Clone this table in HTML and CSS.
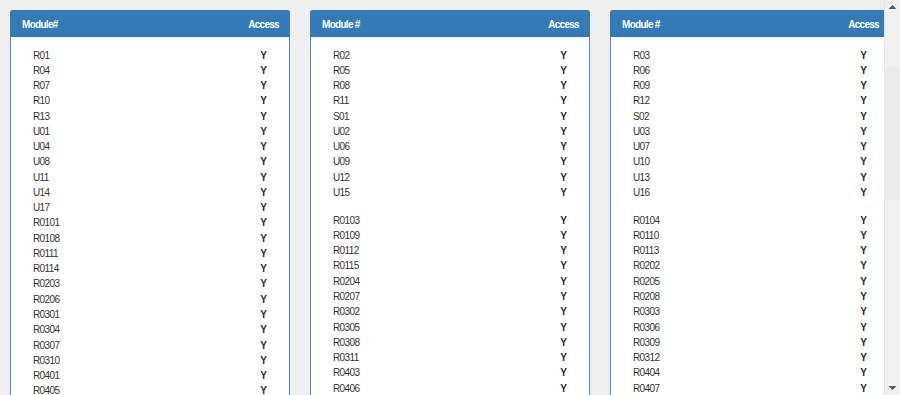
FILE: index.html
```html
<!DOCTYPE html>
<html lang="en">
<head>
<meta charset="utf-8">
<title>Module Access</title>
<link rel="stylesheet" href="styles.css">
</head>
<body>
<div class="screen">
  <div class="viewport">
    <div class="columns">
      <section class="panel">
        <header class="panel-head"><span>Module#</span><span>Access</span></header>
        <div class="panel-body">
          <div class="row"><span>R01</span><b>Y</b></div>
          <div class="row"><span>R04</span><b>Y</b></div>
          <div class="row"><span>R07</span><b>Y</b></div>
          <div class="row"><span>R10</span><b>Y</b></div>
          <div class="row"><span>R13</span><b>Y</b></div>
          <div class="row"><span>U01</span><b>Y</b></div>
          <div class="row"><span>U04</span><b>Y</b></div>
          <div class="row"><span>U08</span><b>Y</b></div>
          <div class="row"><span>U11</span><b>Y</b></div>
          <div class="row"><span>U14</span><b>Y</b></div>
          <div class="row"><span>U17</span><b>Y</b></div>
          <div class="row"><span>R0101</span><b>Y</b></div>
          <div class="row"><span>R0108</span><b>Y</b></div>
          <div class="row"><span>R0111</span><b>Y</b></div>
          <div class="row"><span>R0114</span><b>Y</b></div>
          <div class="row"><span>R0203</span><b>Y</b></div>
          <div class="row"><span>R0206</span><b>Y</b></div>
          <div class="row"><span>R0301</span><b>Y</b></div>
          <div class="row"><span>R0304</span><b>Y</b></div>
          <div class="row"><span>R0307</span><b>Y</b></div>
          <div class="row"><span>R0310</span><b>Y</b></div>
          <div class="row"><span>R0401</span><b>Y</b></div>
          <div class="row"><span>R0405</span><b>Y</b></div>
        </div>
      </section>
      <section class="panel">
        <header class="panel-head"><span>Module #</span><span>Access</span></header>
        <div class="panel-body">
          <div class="row"><span>R02</span><b>Y</b></div>
          <div class="row"><span>R05</span><b>Y</b></div>
          <div class="row"><span>R08</span><b>Y</b></div>
          <div class="row"><span>R11</span><b>Y</b></div>
          <div class="row"><span>S01</span><b>Y</b></div>
          <div class="row"><span>U02</span><b>Y</b></div>
          <div class="row"><span>U06</span><b>Y</b></div>
          <div class="row"><span>U09</span><b>Y</b></div>
          <div class="row"><span>U12</span><b>Y</b></div>
          <div class="row"><span>U15</span><b>Y</b></div>
          <div class="spacer"></div>
          <div class="row"><span>R0103</span><b>Y</b></div>
          <div class="row"><span>R0109</span><b>Y</b></div>
          <div class="row"><span>R0112</span><b>Y</b></div>
          <div class="row"><span>R0115</span><b>Y</b></div>
          <div class="row"><span>R0204</span><b>Y</b></div>
          <div class="row"><span>R0207</span><b>Y</b></div>
          <div class="row"><span>R0302</span><b>Y</b></div>
          <div class="row"><span>R0305</span><b>Y</b></div>
          <div class="row"><span>R0308</span><b>Y</b></div>
          <div class="row"><span>R0311</span><b>Y</b></div>
          <div class="row"><span>R0403</span><b>Y</b></div>
          <div class="row"><span>R0406</span><b>Y</b></div>
        </div>
      </section>
      <section class="panel">
        <header class="panel-head"><span>Module #</span><span>Access</span></header>
        <div class="panel-body">
          <div class="row"><span>R03</span><b>Y</b></div>
          <div class="row"><span>R06</span><b>Y</b></div>
          <div class="row"><span>R09</span><b>Y</b></div>
          <div class="row"><span>R12</span><b>Y</b></div>
          <div class="row"><span>S02</span><b>Y</b></div>
          <div class="row"><span>U03</span><b>Y</b></div>
          <div class="row"><span>U07</span><b>Y</b></div>
          <div class="row"><span>U10</span><b>Y</b></div>
          <div class="row"><span>U13</span><b>Y</b></div>
          <div class="row"><span>U16</span><b>Y</b></div>
          <div class="spacer"></div>
          <div class="row"><span>R0104</span><b>Y</b></div>
          <div class="row"><span>R0110</span><b>Y</b></div>
          <div class="row"><span>R0113</span><b>Y</b></div>
          <div class="row"><span>R0202</span><b>Y</b></div>
          <div class="row"><span>R0205</span><b>Y</b></div>
          <div class="row"><span>R0208</span><b>Y</b></div>
          <div class="row"><span>R0303</span><b>Y</b></div>
          <div class="row"><span>R0306</span><b>Y</b></div>
          <div class="row"><span>R0309</span><b>Y</b></div>
          <div class="row"><span>R0312</span><b>Y</b></div>
          <div class="row"><span>R0404</span><b>Y</b></div>
          <div class="row"><span>R0407</span><b>Y</b></div>
        </div>
      </section>
    </div>
  </div>
  <div class="scrollbar">
    <div class="sb-btn"><svg width="9" height="6" viewBox="0 0 9 6"><path d="M0.5 5 L4.5 1 L8.5 5 Z" fill="#5a5a5a"/></svg></div>
    <div class="sb-track">
      <div class="sb-gap-top"></div>
      <div class="sb-thumb"></div>
    </div>
    <div class="sb-btn"><svg width="9" height="6" viewBox="0 0 9 6"><path d="M0.5 1 L4.5 5 L8.5 1 Z" fill="#5a5a5a"/></svg></div>
  </div>
</div>
</body>
</html>
```

FILE: styles.css
```css
html, body {
  margin: 0;
  padding: 0;
  height: 100%;
  overflow: hidden;
}

body {
  background: #efefef;
  font-family: "Liberation Sans", Arial, sans-serif;
  color: #333333;
}

.screen {
  display: flex;
  height: 395px;
  width: 900px;
}

.viewport {
  flex: 1 1 auto;
  overflow: hidden;
  min-width: 0;
}

.columns {
  display: flex;
  gap: 20px;
  padding: 10px 10px 0 10px;
  width: 880px;
}

.panel {
  flex: 0 0 280px;
  width: 280px;
  box-sizing: border-box;
  background: #ffffff;
  border: 1px solid #4f8bc6;
  border-top: none;
  border-radius: 4px 4px 0 0;
}

.panel-head {
  display: flex;
  justify-content: space-between;
  align-items: center;
  box-sizing: border-box;
  height: 27px;
  margin: 0 -1px;
  padding: 2px 11px 0 12px;
  background: #337ab7;
  border-radius: 3px 3px 0 0;
  color: #ffffff;
  font-size: 10px;
  font-weight: bold;
  letter-spacing: -0.7px;
}

.panel-body {
  padding: 10.5px 22px 20px 22px;
  font-size: 10px;
  letter-spacing: -0.6px;
}

.row {
  display: flex;
  justify-content: space-between;
  line-height: 15.27px;
  height: 15.27px;
}

.row b {
  font-weight: bold;
  color: #2b2b2b;
  letter-spacing: 0;
}

.spacer {
  height: 12.5px;
}

.scrollbar {
  flex: 0 0 16px;
  display: flex;
  flex-direction: column;
  background: #f0f0f0;
  border-left: 1px solid #e6e6e6;
  box-sizing: border-box;
}

.sb-btn {
  height: 14px;
  display: flex;
  align-items: center;
  justify-content: center;
}

.sb-track {
  flex: 1 1 auto;
  display: flex;
  flex-direction: column;
}

.sb-gap-top {
  height: 53px;
}

.sb-thumb {
  height: 133px;
  background: #ebebeb;
}
```
